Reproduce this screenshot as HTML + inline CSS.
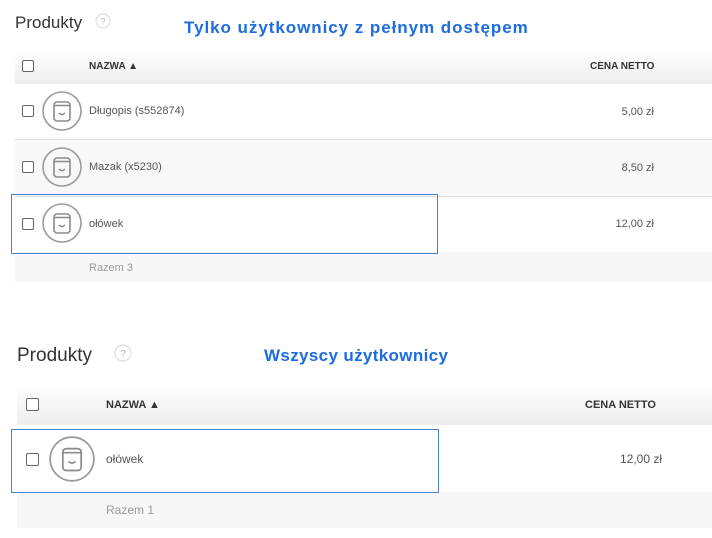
<!DOCTYPE html>
<html><head><meta charset="utf-8"><style>
*{margin:0;padding:0;box-sizing:border-box}
body{width:712px;height:538px;background:#fff;font-family:"Liberation Sans",Arial,sans-serif;position:relative;overflow:hidden;color:#555}
.a{position:absolute;white-space:nowrap}
.hdr{position:absolute;background:linear-gradient(#fff,#ededed)}
.cb{position:absolute;border:1.5px solid #666;border-radius:2px;background:#fff}
.blue{color:#1d6ce0;font-weight:bold}
.line{position:absolute;height:1px;background:#e2e2e2}
</style></head><body>
<!-- top -->
<div class="a" style="left:15px;top:13px;font-size:17px;color:#333">Produkty</div>
<svg class="a" style="left:95px;top:13px" width="16" height="16"><circle cx="8" cy="8" r="7" fill="none" stroke="#ddd" stroke-width="1.2"/><text x="8" y="11.5" font-size="9" text-anchor="middle" fill="#bbb" font-family="Liberation Sans">?</text></svg>
<div class="a blue" style="left:184px;top:18px;font-size:17px;letter-spacing:0.95px">Tylko użytkownicy z pełnym dostępem</div>
<div class="hdr" style="left:15px;top:50px;width:697px;height:34px"></div>
<div class="cb" style="left:22px;top:60px;width:12px;height:12px"></div>
<div class="a" style="left:89px;top:61px;font-size:10px;font-weight:bold;color:#333">NAZWA ▲</div>
<div class="a" style="left:590px;top:61px;font-size:10px;font-weight:bold;color:#333">CENA NETTO</div>
<div class="a" style="left:15px;top:140px;width:697px;height:56px;background:#f8f8f8"></div>
<div class="line" style="left:15px;top:139px;width:697px"></div>
<div class="line" style="left:15px;top:196px;width:697px"></div>
<div class="a" style="left:15px;top:252px;width:697px;height:30px;background:#f7f7f7"></div>
<div class="a" style="left:11px;top:194px;width:427px;height:60px;border:1px solid #4a7fd6"></div>

<svg class="a" style="left:0;top:0" width="712" height="300">
<defs><g id="ic"><circle cx="0" cy="0" r="19" fill="none" stroke="#9a9a9a" stroke-width="1.6"/><rect x="-8" y="-9" width="16" height="19" rx="3" fill="none" stroke="#8a8a8a" stroke-width="1.6"/><path d="M-8,-5.5 h16" stroke="#8a8a8a" stroke-width="1.5"/><path d="M-3,2 q3,3 6,0" fill="none" stroke="#8a8a8a" stroke-width="1.4"/></g></defs>
<use href="#ic" x="62" y="111"/><use href="#ic" x="62" y="167"/><use href="#ic" x="62" y="223"/>
</svg>
<div class="cb" style="left:22px;top:105px;width:12px;height:12px"></div>
<div class="cb" style="left:22px;top:161px;width:12px;height:12px"></div>
<div class="cb" style="left:22px;top:218px;width:12px;height:12px"></div>
<div class="a" style="left:89px;top:105px;font-size:11px">Długopis (s552874)</div>
<div class="a" style="left:89px;top:161px;font-size:11px">Mazak (x5230)</div>
<div class="a" style="left:89px;top:218px;font-size:11px">ołówek</div>
<div class="a" style="right:58px;top:106px;font-size:11px">5,00 zł</div>
<div class="a" style="right:58px;top:162px;font-size:11px">8,50 zł</div>
<div class="a" style="right:58px;top:218px;font-size:11px">12,00 zł</div>
<div class="a" style="left:89px;top:262px;font-size:11px;color:#999">Razem 3</div>

<!-- bottom -->
<div class="a" style="left:17px;top:345px;font-size:19px;color:#333">Produkty</div>
<svg class="a" style="left:114px;top:344px" width="18" height="18"><circle cx="9" cy="9" r="8" fill="none" stroke="#ddd" stroke-width="1.2"/><text x="9" y="13" font-size="10" text-anchor="middle" fill="#bbb" font-family="Liberation Sans">?</text></svg>
<div class="a blue" style="left:264px;top:346px;font-size:17px;letter-spacing:0.35px">Wszyscy użytkownicy</div>
<div class="hdr" style="left:17px;top:386px;width:695px;height:39px"></div>
<div class="cb" style="left:26px;top:398px;width:13px;height:13px"></div>
<div class="a" style="left:106px;top:399px;font-size:11px;font-weight:bold;color:#333">NAZWA ▲</div>
<div class="a" style="left:585px;top:399px;font-size:11px;font-weight:bold;color:#333">CENA NETTO</div>
<div class="a" style="left:17px;top:492px;width:695px;height:36px;background:#f7f7f7"></div>
<div class="a" style="left:11px;top:429px;width:428px;height:64px;border:1px solid #4a7fd6"></div>
<svg class="a" style="left:0;top:420px" width="120" height="80"><g transform="translate(72,39) scale(1.15)"><circle cx="0" cy="0" r="19" fill="none" stroke="#9a9a9a" stroke-width="1.5"/><rect x="-8" y="-9" width="16" height="19" rx="3" fill="none" stroke="#8a8a8a" stroke-width="1.5"/><path d="M-8,-5.5 h16" stroke="#8a8a8a" stroke-width="1.4"/><path d="M-3,2 q3,3 6,0" fill="none" stroke="#8a8a8a" stroke-width="1.3"/></g></svg>
<div class="cb" style="left:26px;top:453px;width:13px;height:13px"></div>
<div class="a" style="left:106px;top:452px;font-size:12px">ołówek</div>
<div class="a" style="right:50px;top:452px;font-size:12px">12,00 zł</div>
<div class="a" style="left:106px;top:503px;font-size:12px;color:#999">Razem 1</div>
</body></html>
